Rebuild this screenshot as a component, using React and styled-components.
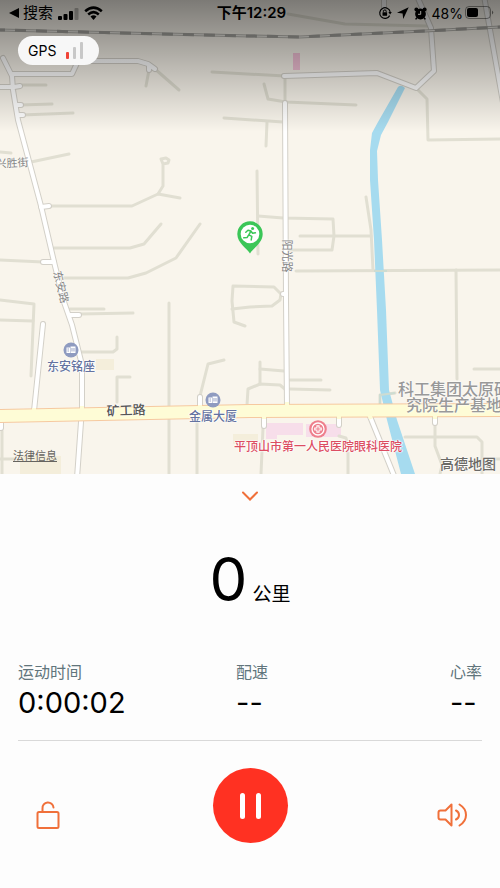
import React from "react";
import styled, { createGlobalStyle } from "styled-components";

const lanes = [
  "M22 85H46",
  "M20 105L52 104",
  "M22 115L73 113",
  "M149 70L146 86",
  "M155 69L179 90",
  "M212 72L285 76",
  "M224 118L283 122",
  "M267 122L266 146",
  "M288 14L345 24L427 26",
  "M264 84L268 99L286 102L356 105",
  "M285 77V102",
  "M257 171L258 254",
  "M258 216L283 218L333 219L334 236L332 250H288",
  "M300 236H371",
  "M366 197L371 230L373 270",
  "M296 271L500 270",
  "M456 270L457 379",
  "M417 89L427 99L428 140L500 139",
  "M0 152L11 153",
  "M31 162L69 154",
  "M0 260L43 262",
  "M50 206H132L158 194L180 198",
  "M158 194L163 186V164L168 163L169 160L166 158L161 159L163 164",
  "M54 248H130L144 244L161 224",
  "M64 278H128L146 273L176 258L200 224",
  "M285 294H281L274 287L233 286L232 301L234 322L245 326",
  "M232 309L250 307L272 306L280 300L281 294",
  "M0 300L34 304L31 376",
  "M0 320L33 321",
  "M70 309H104",
  "M80 314L133 313",
  "M80 352H113L117 349V337",
  "M169 303V474",
  "M117 402V377H130",
  "M200 396L208 364L224 360",
  "M197 420V474",
  "M247 405L248 389L260 384L280 385L286 390",
  "M260 384V362",
  "M260 369L284 371",
  "M290 380H321",
  "M290 389L330 390",
  "M474 369H500",
  "M395 393L380 395V405",
  "M263 428L261 474",
  "M339 436L346 438L348 446V474",
  "M435 425V446L442 465L440 474",
  "M405 437H477L482 442V474",
  "M482 459H500",
  "M2 431V474",
  "M0 459H14",
];

const streets = [
  "M3 58L12 76L13 90L18 120L41 206L55 266L64 302L72 325L82 365V408L77 478",
  "M12 74H72L78 61H138L148 64L155 69",
  "M149 66V70",
  "M-4 87H14L20 86",
  "M16 105H21",
  "M18 115H23",
  "M284 76L377 73L416 88L434 71L431 28L417 -4",
  "M484 -4L504 108",
  "M384 -4V8",
  "M285 103L286 300L287 407",
  "M283 294H286",
  "M41 207L49 206",
  "M43 262H54",
  "M43 324L34 411",
  "M70 315H79",
  "M200 397V410",
  "M264 416V426",
  "M339 416V425",
  "M369 414L395 478",
  "M435 416V423",
  "M1 418V428",
];

const stats = [
  { label: "运动时间", value: "0:00:02" },
  { label: "配速", value: "--" },
  { label: "心率", value: "--" },
];

function MapDrawing() {
  return (
    <MapCanvas viewBox="0 0 500 474" preserveAspectRatio="xMidYMin slice" aria-hidden="true">
      <rect width="500" height="474" fill="#f9f5ec" />
      <g fill="#f4eedb">
        <rect x="96" y="359" width="18" height="11" />
        <rect x="20" y="456" width="41" height="18" />
        <rect x="233" y="434" width="25" height="10" />
      </g>
      <g fill="#f7deea">
        <rect x="293" y="53" width="7" height="17" fill="#f5c3d8" />
        <path d="M266 423H303V435H277V439H266Z" />
        <rect x="306" y="424" width="35" height="13" />
      </g>
      <g fill="none" stroke="#e1dfd2" strokeWidth="3" strokeLinecap="round" strokeLinejoin="round">
        {lanes.map((d) => (
          <path key={d} d={d} />
        ))}
      </g>
      <path
        d="M398 87Q401 84 405 88L388 122L381 135L377 151L378 180L382 240L386 310L389 390L397 420L415 474H401L387 420L380 390L377 310L374 240L370 180V150L372 133L378 122Z"
        fill="#a6dbef"
      />
      <path d="M374 271H387M380 404V395L395 393" fill="none" stroke="#cddcd2" strokeWidth="2" />
      <g fill="none" strokeLinecap="round" strokeLinejoin="round">
        {streets.map((d) => (
          <path key={d} d={d} stroke="#d3d0c8" strokeWidth="6" />
        ))}
        {streets.map((d) => (
          <path key={d} d={d} stroke="#fff" strokeWidth="4" />
        ))}
      </g>
      <path d="M-4 416L250 411L504 410" fill="none" stroke="#f6c9a0" strokeWidth="14" />
      <path d="M-4 416L250 411L504 410" fill="none" stroke="#fefcd6" strokeWidth="12" />
      <path
        d="M34 408V413M82 406V411M200 405V409M287 402V407M80 418L82 413M369 414L371 419M264 413V419M339 413V419M435 412V419"
        stroke="#fefcd6"
        strokeWidth="4"
      />
      <path d="M0 30L250 36L300 37L425 31L500 27" fill="none" stroke="#b5b4ae" strokeWidth="3" />
      <path d="M0 30L250 36L300 37L425 31L500 27" fill="none" stroke="#f1efe9" strokeWidth="1" />
      <path
        d="M0 30L250 36L300 37L425 31L500 27"
        fill="none"
        stroke="#a3a29d"
        strokeWidth="3"
        strokeDasharray="11 10"
        strokeDashoffset="6"
      />
    </MapCanvas>
  );
}

function SignalIcon() {
  return (
    <svg width="21" height="13" viewBox="0 0 21 13" aria-hidden="true">
      <rect x="0" y="9" width="4" height="4" rx="1" />
      <rect x="5.5" y="7" width="4" height="6" rx="1" />
      <rect x="11" y="4" width="4" height="9" rx="1" />
      <rect x="16.5" y="1" width="4" height="12" rx="1" opacity="0.25" />
    </svg>
  );
}

function WifiIcon() {
  return (
    <svg width="19" height="14" viewBox="0 0 19 14" fill="none" stroke="#000" strokeWidth="2.6" aria-hidden="true">
      <path d="M1.2 5.2Q9.5-2 17.8 5.2" />
      <path d="M4.2 8.4Q9.5 4 14.8 8.4" />
      <path d="M6.5 10.6Q9.5 8 12.5 10.6L9.5 14Z" fill="#000" stroke="none" />
    </svg>
  );
}

function RotationLockIcon() {
  return (
    <svg width="14" height="14" viewBox="0 0 14 14" fill="none" stroke="#000" strokeWidth="1.2" aria-hidden="true">
      <path d="M11.7 9.6A5.3 5.3 0 1 1 12.2 5.8" />
      <path d="M10.4 6H13.8L12.1 8.4Z" fill="#000" stroke="none" />
      <path d="M5.4 6.3V5.3a1.4 1.4 0 0 1 2.8 0v1" strokeWidth="1" />
      <rect x="4.5" y="6.2" width="4.6" height="3.6" rx="0.6" fill="#000" stroke="none" />
    </svg>
  );
}

function LocationIcon() {
  return (
    <svg width="12" height="12" viewBox="0 0 12 12" aria-hidden="true">
      <path d="M11.7 0.3L6.2 12L5.6 6.4L0 5.8Z" />
    </svg>
  );
}

function AlarmIcon() {
  return (
    <svg width="13" height="13" viewBox="0 0 13 13" aria-hidden="true">
      <circle cx="6.5" cy="7" r="5.4" />
      <circle cx="2.4" cy="2.4" r="2" />
      <circle cx="10.6" cy="2.4" r="2" />
      <path d="M3 10.6L1.6 12.4M10 10.6L11.4 12.4" stroke="#000" strokeWidth="1.5" />
      <path d="M6.7 4V7.3H4" fill="none" stroke="#a19f9a" strokeWidth="1" />
    </svg>
  );
}

function BatteryIcon() {
  return (
    <svg width="29" height="14" viewBox="0 0 29 14" aria-hidden="true">
      <rect x="0.5" y="0.5" width="25" height="12" rx="3.5" fill="none" stroke="#000" strokeOpacity="0.4" />
      <rect x="2" y="2" width="11" height="9" rx="2" />
      <path d="M27 4.5Q29.4 6.5 27 8.5Z" opacity="0.5" />
    </svg>
  );
}

function RunnerPin() {
  return (
    <svg width="26" height="33" viewBox="0 0 26 33" aria-hidden="true">
      <path d="M13 32.5C10 27.5 0.3 22 0.3 13A12.7 12.7 0 0 1 25.7 13C25.7 22 16 27.5 13 32.5Z" fill="#3bc657" />
      <circle cx="13" cy="13" r="9.3" fill="#fff" />
      <circle cx="15.6" cy="7.6" r="1.5" fill="#3bc657" />
      <path
        d="M8.8 11.2L11 9.2L14 10L11.8 13.8L14.8 15.4L14.2 19M11.4 14.4L10.2 16.4L6.8 16.8M14 10.2L15.6 12.3L18.4 11.8"
        fill="none"
        stroke="#3bc657"
        strokeWidth="1.5"
        strokeLinecap="round"
        strokeLinejoin="round"
      />
    </svg>
  );
}

function BuildingIcon() {
  return (
    <svg width="16" height="16" viewBox="0 0 16 16" aria-hidden="true">
      <circle cx="8" cy="8" r="7.5" fill="#8f9bc0" />
      <path d="M3.5 5.5H7V11H3.5ZM7.5 4.5H12.5V11H7.5Z" fill="#fff" />
      <path d="M4.5 7H6M4.5 9H6M9 6V9.5M11 6V9.5" stroke="#8f9bc0" strokeWidth="0.9" />
    </svg>
  );
}

function HospitalIcon() {
  return (
    <svg width="18" height="18" viewBox="0 0 18 18" aria-hidden="true">
      <circle cx="9" cy="9" r="8.8" fill="#ee7f8c" />
      <circle cx="9" cy="9" r="6" fill="none" stroke="#fff" strokeWidth="1.3" />
      <path d="M9 5.2V12.8M5.2 9H12.8" stroke="#fff" strokeWidth="3.2" />
      <path d="M9 6.4V11.6M6.4 9H11.6" stroke="#ee7f8c" strokeWidth="1.1" />
    </svg>
  );
}

export default function App() {
  return (
    <Page>
      <GlobalStyle />
      <MapSection>
        <MapDrawing />
        <Place $x={71} $y={342} $color="#6473a0">
          <BuildingIcon />
          东安铭座
        </Place>
        <Place $x={213} $y={392} $color="#6473a0">
          <BuildingIcon />
          金属大厦
        </Place>
        <Place $x={318} $y={420} $color="#dc4d62">
          <HospitalIcon />
          平顶山市第一人民医院眼科医院
        </Place>
        <Place $x={250} $y={221}>
          <RunnerPin />
        </Place>
        <Street $x={12} $y={163} $angle={-3}>兴胜街</Street>
        <Street $x={61} $y={287} $angle={76}>东安路</Street>
        <Street $x={287} $y={256} $angle={90}>阳光路</Street>
        <Street $x={126} $y={410} $angle={-2} $main>矿工路</Street>
        <District>
          科工集团太原研
          <br />
          究院生产基地
        </District>
        <Shade />
        <StatusBar>
          <StatusGroup>
            <BackLink href="#search">
              <svg width="10" height="10" viewBox="0 0 10 10" aria-hidden="true">
                <path d="M0 5L10 0V10Z" />
              </svg>
              搜索
            </BackLink>
            <SignalIcon />
            <WifiIcon />
          </StatusGroup>
          <Clock>下午12:29</Clock>
          <StatusGroup $end>
            <RotationLockIcon />
            <LocationIcon />
            <AlarmIcon />
            <Battery>
              48%
              <BatteryIcon />
            </Battery>
          </StatusGroup>
        </StatusBar>
        <GpsBadge>
          GPS
          <svg width="18" height="17" viewBox="0 0 18 17" aria-hidden="true">
            <rect x="0" y="10" width="3" height="7" rx="1" fill="#f04438" />
            <rect x="7" y="5" width="3" height="12" rx="1" fill="#c8c8c8" />
            <rect x="14" y="0" width="3" height="17" rx="1" fill="#c8c8c8" />
          </svg>
        </GpsBadge>
        <MapFooter>
          <LegalLink href="#legal">法律信息</LegalLink>
          <MapBrand>高德地图</MapBrand>
        </MapFooter>
      </MapSection>

      <Panel>
        <CollapseButton aria-label="收起">
          <svg width="18" height="10" viewBox="0 0 18 10" fill="none" stroke="#f0703a" strokeWidth="2" strokeLinecap="round">
            <path d="M2 1.5L9 8.5L16 1.5" />
          </svg>
        </CollapseButton>
        <Distance>
          <strong>0</strong>
          <span>公里</span>
        </Distance>
        <Stats>
          {stats.map((stat) => (
            <Stat key={stat.label}>
              <dt>{stat.label}</dt>
              <dd>{stat.value}</dd>
            </Stat>
          ))}
        </Stats>
        <Controls>
          <IconButton aria-label="锁定">
            <svg width="24" height="28" viewBox="0 0 24 28" fill="none" stroke="#f0703a" strokeWidth="2" strokeLinecap="round">
              <rect x="1.5" y="11" width="21" height="16" rx="1.5" />
              <path d="M6.5 11V7.5A5.5 5.5 0 0 1 17.5 6.5" />
            </svg>
          </IconButton>
          <PauseButton aria-label="暂停">
            <svg width="21" height="26" viewBox="0 0 21 26" fill="#fff">
              <rect x="0" y="0" width="5" height="26" rx="2.5" />
              <rect x="16" y="0" width="5" height="26" rx="2.5" />
            </svg>
          </PauseButton>
          <IconButton aria-label="声音">
            <svg
              width="30"
              height="24"
              viewBox="0 0 30 24"
              fill="none"
              stroke="#f0703a"
              strokeWidth="2"
              strokeLinecap="round"
              strokeLinejoin="round"
            >
              <path d="M14.5 1.5V22.5L8.5 16.5H3.5Q1.5 16.5 1.5 14.5V9.5Q1.5 7.5 3.5 7.5H8.5Z" />
              <path d="M19 7.500Q22 9 22 12T19 16.500" />
              <path d="M22.5 1.5Q29 5.500 29 12T22.5 22.5" />
            </svg>
          </IconButton>
        </Controls>
      </Panel>
    </Page>
  );
}

const GlobalStyle = createGlobalStyle`
  * {
    box-sizing: border-box;
  }

  body {
    margin: 0;
    background-color: #fdfdfd;
    color: #000;
    font-family: Inter, "Noto Sans CJK SC", sans-serif;
  }

  svg {
    display: block;
    flex-shrink: 0;
  }
`;

const Page = styled.main`
  display: flex;
  flex-direction: column;
  min-height: 100vh;
`;

const MapSection = styled.section`
  display: flex;
  flex-direction: column;
  align-items: flex-start;
  position: relative;
  min-height: 474px;
  overflow: hidden;
  background-color: #f9f5ec;
`;

const MapCanvas = styled.svg`
  position: absolute;
  inset: 0;
  width: 100%;
  height: 100%;
`;

const Shade = styled.div`
  position: absolute;
  inset: 0 0 auto;
  height: 132px;
  background: linear-gradient(
    rgba(0, 0, 0, 0.5),
    rgba(0, 0, 0, 0.38) 24%,
    rgba(0, 0, 0, 0.28) 44%,
    rgba(0, 0, 0, 0.15) 70%,
    rgba(0, 0, 0, 0)
  );
`;

const Place = styled.div`
  display: flex;
  flex-direction: column;
  align-items: center;
  position: absolute;
  left: ${({ $x }) => $x}px;
  top: ${({ $y }) => $y}px;
  transform: translateX(-50%);
  color: ${({ $color }) => $color};
  font-size: 12px;
  font-weight: 500;
  line-height: 18px;
  white-space: nowrap;
  text-shadow: 0 0 2px #fff, 0 0 2px #fff, 1px 0 1px #fff, -1px 0 1px #fff;
`;

const Street = styled.span`
  position: absolute;
  left: ${({ $x }) => $x}px;
  top: ${({ $y }) => $y}px;
  transform: translate(-50%, -50%) rotate(${({ $angle }) => $angle}deg);
  color: ${({ $main }) => ($main ? "#555" : "#858585")};
  font-size: ${({ $main }) => ($main ? 13 : 11)}px;
  font-weight: ${({ $main }) => ($main ? 500 : 400)};
  line-height: 16px;
  white-space: nowrap;
  text-shadow: 0 0 2px #fff, 0 0 2px #fff;
`;

const District = styled.div`
  position: absolute;
  left: 454px;
  top: 381px;
  transform: translateX(-50%);
  color: #999;
  font-size: 16px;
  font-weight: 500;
  line-height: 16px;
  text-align: center;
  white-space: nowrap;
  text-shadow: 0 0 2px #fff, 0 0 2px #fff;
`;

const StatusBar = styled.header`
  display: grid;
  grid-template-columns: 1fr auto 1fr;
  align-items: center;
  position: relative;
  width: 100%;
  height: 26px;
  padding: 0 6px 0 9px;
`;

const StatusGroup = styled.div`
  display: flex;
  align-items: center;
  justify-content: ${({ $end }) => ($end ? "flex-end" : "flex-start")};
  gap: 5px;
`;

const BackLink = styled.a`
  display: flex;
  align-items: center;
  gap: 4px;
  color: #000;
  font-size: 15px;
  line-height: 24px;
  text-decoration: none;
`;

const Clock = styled.time`
  font-size: 15px;
  font-weight: 600;
  line-height: 24px;
`;

const Battery = styled.div`
  display: flex;
  align-items: center;
  gap: 2px;
  font-size: 14px;
`;

const GpsBadge = styled.div`
  display: flex;
  align-items: center;
  gap: 10px;
  position: relative;
  height: 29px;
  margin: 10px 18px;
  padding: 0 15px 0 10px;
  border-radius: 15px;
  background-color: #f7f7f7;
  font-size: 14px;
`;

const MapFooter = styled.div`
  display: flex;
  align-items: flex-end;
  justify-content: space-between;
  position: relative;
  width: 100%;
  margin-top: auto;
  padding: 0 4px 0 13px;
`;

const LegalLink = styled.a`
  margin-bottom: 10px;
  color: #66645f;
  font-size: 11px;
  line-height: 16px;
`;

const MapBrand = styled.span`
  color: #6b6a67;
  font-size: 14px;
  font-weight: 500;
  line-height: 20px;
  text-shadow: 0 0 2px #fff, 0 0 2px #fff;
`;

const Panel = styled.section`
  display: flex;
  flex-direction: column;
  padding: 0 18px;
`;

const Button = styled.button`
  display: flex;
  align-items: center;
  justify-content: center;
  padding: 0;
  border: none;
  background-color: transparent;
  cursor: pointer;
`;

const CollapseButton = styled(Button)`
  align-self: center;
  width: 58px;
  height: 44px;
`;

const Distance = styled.div`
  display: flex;
  align-items: baseline;
  justify-content: center;
  gap: 5px;
  padding-top: 24px;

  strong {
    font-size: 60px;
    font-weight: 400;
    line-height: 74px;
  }

  span {
    font-size: 19px;
    line-height: 28px;
  }
`;

const Stats = styled.dl`
  display: grid;
  grid-template-columns: 47% 1fr auto;
  margin: 44px 0 0;
  padding-bottom: 18px;
  border-bottom: 1px solid #d9d9d9;
`;

const Stat = styled.div`
  dt {
    color: #61757c;
    font-size: 16px;
    line-height: 24px;
  }

  dd {
    margin: 0;
    font-size: 29px;
    line-height: 38px;
  }
`;

const Controls = styled.div`
  display: flex;
  align-items: center;
  justify-content: space-between;
  padding: 27px 14px;
`;

const IconButton = styled(Button)`
  width: 32px;
  height: 40px;
  margin-top: 18px;
`;

const PauseButton = styled(Button)`
  width: 75px;
  height: 75px;
  border-radius: 50%;
  background-color: #ff3122;
`;
